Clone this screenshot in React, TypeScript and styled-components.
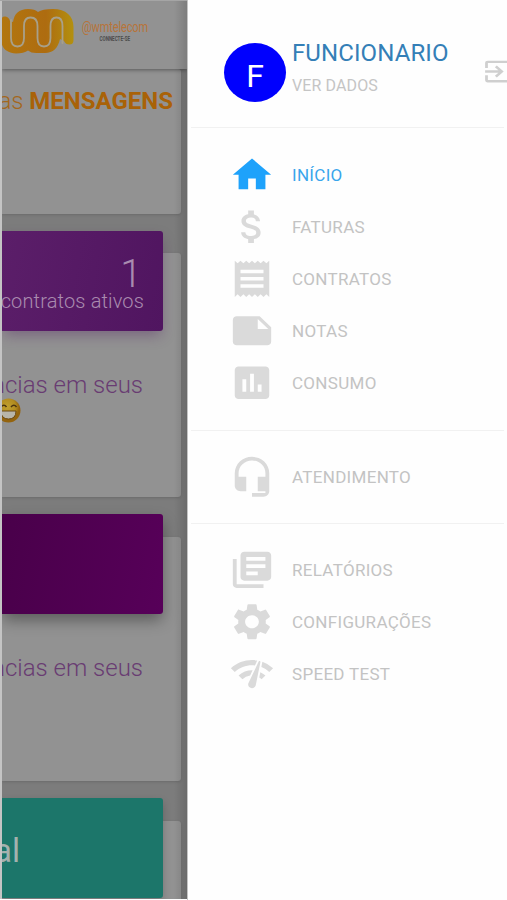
import React from "react";
import styled, { createGlobalStyle, css } from "styled-components";
import {
  MdHome,
  MdAttachMoney,
  MdReceipt,
  MdNote,
  MdAssessment,
  MdHeadsetMic,
  MdLibraryBooks,
  MdSettings,
  MdNetworkCheck,
  MdExitToApp,
} from "react-icons/md";
import type { IconType } from "react-icons";

const GlobalStyle = createGlobalStyle`
  * { box-sizing: border-box; }
  body { margin: 0; background: #fff; font-family: Roboto, "Liberation Sans", sans-serif; }
`;

const Screen = styled.div`
  display: flex;
  width: 507px;
  height: 900px;
  overflow: hidden;
  background: #fefefe;
`;

/* Dimmed dashboard */

const Dashboard = styled.section`
  position: relative;
  display: flex;
  flex-direction: column;
  width: 187px;
  height: 899px;
  padding-left: 2px;
  overflow: hidden;
  background: #7c7c7c;
  border-top: 1px solid #a5a5a5;

  &::after {
    content: "";
    position: absolute;
    inset: 0;
    z-index: 2;
    border-left: 2px solid #c4c4c4;
    background: linear-gradient(to right, transparent 172px, rgba(0, 0, 0, 0.14) 185px);
  }
`;

const TopBar = styled.header`
  position: relative;
  z-index: 1;
  display: flex;
  flex: none;
  height: 68px;
  background: #929292;
  box-shadow: 0 1px 4px rgba(0, 0, 0, 0.4);
`;

const Logo = styled.svg`
  flex: none;
  width: 76px;
  height: 68px;
`;

const Brand = styled.div`
  display: flex;
  flex-direction: column;
  align-items: center;
  width: 74px;
  padding-top: 18px;
`;

const BrandName = styled.span`
  color: #b8743a;
  font: 400 14px/16px Roboto, sans-serif;
  letter-spacing: -0.2px;
  transform: scaleX(0.79);
  white-space: nowrap;
`;

const BrandTag = styled.span`
  color: #4c4c4c;
  font: 700 8px/8px Roboto, sans-serif;
  transform: scaleX(0.57);
  white-space: nowrap;
`;

const Card = styled.article<{ $height: number; $gap: number }>`
  display: flex;
  flex: none;
  flex-direction: column;
  width: 179px;
  height: ${(p) => p.$height}px;
  margin-top: ${(p) => p.$gap}px;
  background: #929292;
  border-radius: 0 3px 3px 0;
  box-shadow: 0 1px 3px rgba(0, 0, 0, 0.14);
`;

const Messages = styled.p`
  display: flex;
  justify-content: flex-end;
  width: 171px;
  margin: 17px 0 0;
  color: #a4671c;
  font-size: 24px;
  line-height: 30px;
  white-space: pre;

  span { font-weight: 300; }
  strong { font-weight: 700; color: #a96208; }
`;

const banners = {
  violet: css`
    background: linear-gradient(100deg, #5b1e69, #501560);
    box-shadow: 0 6px 14px -2px rgba(80, 30, 95, 0.4);
  `,
  plum: css`
    background: linear-gradient(100deg, #49004a, #570059);
    box-shadow: 0 7px 15px -1px rgba(0, 0, 0, 0.38);
  `,
  teal: css`
    background: #1c766a;
    box-shadow: 0 4px 8px rgba(0, 0, 0, 0.2);
  `,
};

const Banner = styled.div<{ $tone: keyof typeof banners; $lift: number }>`
  display: flex;
  flex: none;
  flex-direction: column;
  align-items: flex-end;
  width: 161px;
  height: 100px;
  margin-top: -${(p) => p.$lift}px;
  padding: 20px 19px 0 0;
  border-radius: 0 3px 3px 0;
  color: #a98baf;
  font-weight: 300;
  white-space: nowrap;
  ${(p) => banners[p.$tone]}
`;

const Count = styled.span`
  margin-right: 2px;
  font-size: 39px;
  line-height: 47px;
`;

const CountLabel = styled.span`
  font-size: 20px;
  line-height: 6px;
  letter-spacing: 0.15px;
`;

const PlanWord = styled.span`
  align-self: flex-start;
  margin-left: -8px;
  color: #a4b1ae;
  font-size: 33px;
  font-weight: 400;
  line-height: 65px;
`;

const Notice = styled.p<{ $top: number }>`
  display: flex;
  flex: none;
  justify-content: flex-end;
  width: 141px;
  margin: ${(p) => p.$top}px 0 0;
  color: #693c72;
  font-size: 24px;
  font-weight: 300;
  line-height: 30px;
  white-space: nowrap;
`;

const Emoji = styled.svg`
  flex: none;
  width: 24px;
  height: 25px;
  margin: -2px 0 0 -5px;
`;

/* Navigation drawer */

const Drawer = styled.aside`
  display: flex;
  flex: none;
  flex-direction: column;
  width: 320px;
  height: 900px;
  overflow: hidden;
  background: #fefefe;
  border-left: 1px solid #c4c4c4;
`;

const Profile = styled.div`
  display: flex;
  flex: none;
  height: 127px;
  padding: 37px 0 0 36px;
`;

const Avatar = styled.div`
  display: flex;
  flex: none;
  align-items: center;
  justify-content: center;
  width: 62px;
  height: 59px;
  margin-top: 6px;
  padding-top: 7px;
  border-radius: 50%;
  background: #0000fe;
  color: #fff;
  font-size: 32px;
  font-weight: 400;
  line-height: 1;
`;

const Identity = styled.div`
  display: flex;
  flex: none;
  flex-direction: column;
  width: 195px;
  padding-left: 6px;
`;

const UserName = styled.span`
  color: #347fb7;
  font-size: 24px;
  line-height: 33px;
  letter-spacing: 0.1px;
`;

const UserLink = styled.span`
  color: #c5c5c5;
  font-size: 16px;
  line-height: 31px;
  letter-spacing: 0.12px;
`;

const ExitIcon = styled(MdExitToApp)`
  flex: none;
  width: 33px;
  height: 29px;
  margin-top: 20px;
  color: #cfcfcf;
`;

const Group = styled.nav<{ $top: number; $bottom: number }>`
  display: flex;
  flex: none;
  flex-direction: column;
  padding: ${(p) => p.$top}px 0 ${(p) => p.$bottom}px 41px;
`;

const Divider = styled.hr`
  flex: none;
  width: 313px;
  height: 1px;
  margin: 0 0 0 3px;
  border: 0;
  background: #f1f1f1;
`;

const Item = styled.a<{ $active?: boolean }>`
  display: flex;
  align-items: center;
  height: 52px;
  color: ${(p) => (p.$active ? "#39a5ec" : "#c3c3c3")};
  font-size: 17px;
  letter-spacing: 0.3px;
  white-space: nowrap;

  svg {
    flex: none;
    width: 46px;
    height: 43.5px;
    margin-right: 17px;
    color: ${(p) => (p.$active ? "#1ea2fb" : "#dadada")};
  }
`;

type Entry = { label: string; icon: IconType; active?: boolean };

const mainEntries: Entry[] = [
  { label: "INÍCIO", icon: MdHome, active: true },
  { label: "FATURAS", icon: MdAttachMoney },
  { label: "CONTRATOS", icon: MdReceipt },
  { label: "NOTAS", icon: MdNote },
  { label: "CONSUMO", icon: MdAssessment },
];
const supportEntries: Entry[] = [{ label: "ATENDIMENTO", icon: MdHeadsetMic }];
const toolEntries: Entry[] = [
  { label: "RELATÓRIOS", icon: MdLibraryBooks },
  { label: "CONFIGURAÇÕES", icon: MdSettings },
  { label: "SPEED TEST", icon: MdNetworkCheck },
];

const Entries = ({ items }: { items: Entry[] }) => (
  <>
    {items.map(({ label, icon: Icon, active }) => (
      <Item key={label} $active={active}>
        <Icon preserveAspectRatio="none" />
        <span>{label}</span>
      </Item>
    ))}
  </>
);

const BrandMark = () => (
  <Logo viewBox="2 1 76 68">
    <defs>
      <linearGradient id="mark" x1="0" x2="1">
        <stop offset="0" stopColor="#b2760f" />
        <stop offset="0.62" stopColor="#ae6c10" />
        <stop offset="1" stopColor="#b3900f" />
      </linearGradient>
    </defs>
    <path
      d="M1 20Q2 16 5.500 16.500Q9 17 10 21L13 22C14 14 19 9 28 9Q35 9 38 12Q42 9 53 9C66 9 73.500 16 73.500 27V40Q73.500 44.500 69.500 44.500Q65.500 44.500 64 41L60 39C58 48 53 53 45 53H36Q31 53 28 50.500Q24 53.500 16 53.500C7 53.500 1 48 1 39Z"
      fill="url(#mark)"
    />
    <path
      d="M11 20V38C11 43.500 13 46.500 17.500 46.500C22 46.500 24 43.500 24 38V26C24 20 26.500 17.500 30.500 17.500C35 17.500 37.500 20 37.500 26V38C37.500 43.500 40 46.500 44 46.500C48 46.500 50.500 43.500 50.500 38V26C50.500 20 52.500 17.500 56.500 17.500C60.500 17.500 62.500 20 62.500 26V43"
      fill="none"
      stroke="#a8a08a"
      strokeWidth="1.800"
      strokeLinecap="round"
    />
  </Logo>
);

const GrinEmoji = () => (
  <Emoji viewBox="0 0 24 25">
    <defs>
      <radialGradient id="face" cx="0.45" cy="0.35">
        <stop offset="0" stopColor="#c0a030" />
        <stop offset="0.7" stopColor="#b28c20" />
        <stop offset="1" stopColor="#94640f" />
      </radialGradient>
    </defs>
    <circle cx="11.500" cy="12.500" r="12" fill="url(#face)" />
    <path d="M4 9Q7 5.500 9.500 9M14 9Q17 5.500 19.500 9" fill="none" stroke="#4c3510" strokeWidth="1.500" />
    <path d="M4 13H19Q19 21 11.500 21Q4 21 4 13Z" fill="#b8b5aa" stroke="#6a4814" strokeWidth="1" />
  </Emoji>
);

export default function App() {
  return (
    <>
      <GlobalStyle />
      <Screen>
        <Dashboard>
          <TopBar>
            <BrandMark />
            <Brand>
              <BrandName>@wmtelecom</BrandName>
              <BrandTag>CONNECTE-SE</BrandTag>
            </Brand>
          </TopBar>
          <Card $height={145} $gap={0}>
            <Messages>
              <span>as </span>
              <strong>MENSAGENS</strong>
            </Messages>
          </Card>
          <Card $height={244} $gap={39}>
            <Banner $tone="violet" $lift={22}>
              <Count>1</Count>
              <CountLabel>contratos ativos</CountLabel>
            </Banner>
            <Notice $top={39}>ncias em seus</Notice>
            <GrinEmoji />
          </Card>
          <Card $height={244} $gap={40}>
            <Banner $tone="plum" $lift={23} />
            <Notice $top={39}>ncias em seus</Notice>
          </Card>
          <Card $height={120} $gap={40}>
            <Banner $tone="teal" $lift={23}>
              <PlanWord>al</PlanWord>
            </Banner>
          </Card>
        </Dashboard>
        <Drawer>
          <Profile>
            <Avatar>F</Avatar>
            <Identity>
              <UserName>FUNCIONARIO</UserName>
              <UserLink>VER DADOS</UserLink>
            </Identity>
            <ExitIcon preserveAspectRatio="none" />
          </Profile>
          <Divider />
          <Group $top={21} $bottom={21}>
            <Entries items={mainEntries} />
          </Group>
          <Divider />
          <Group $top={20} $bottom={20}>
            <Entries items={supportEntries} />
          </Group>
          <Divider />
          <Group $top={20} $bottom={0}>
            <Entries items={toolEntries} />
          </Group>
        </Drawer>
      </Screen>
    </>
  );
}
